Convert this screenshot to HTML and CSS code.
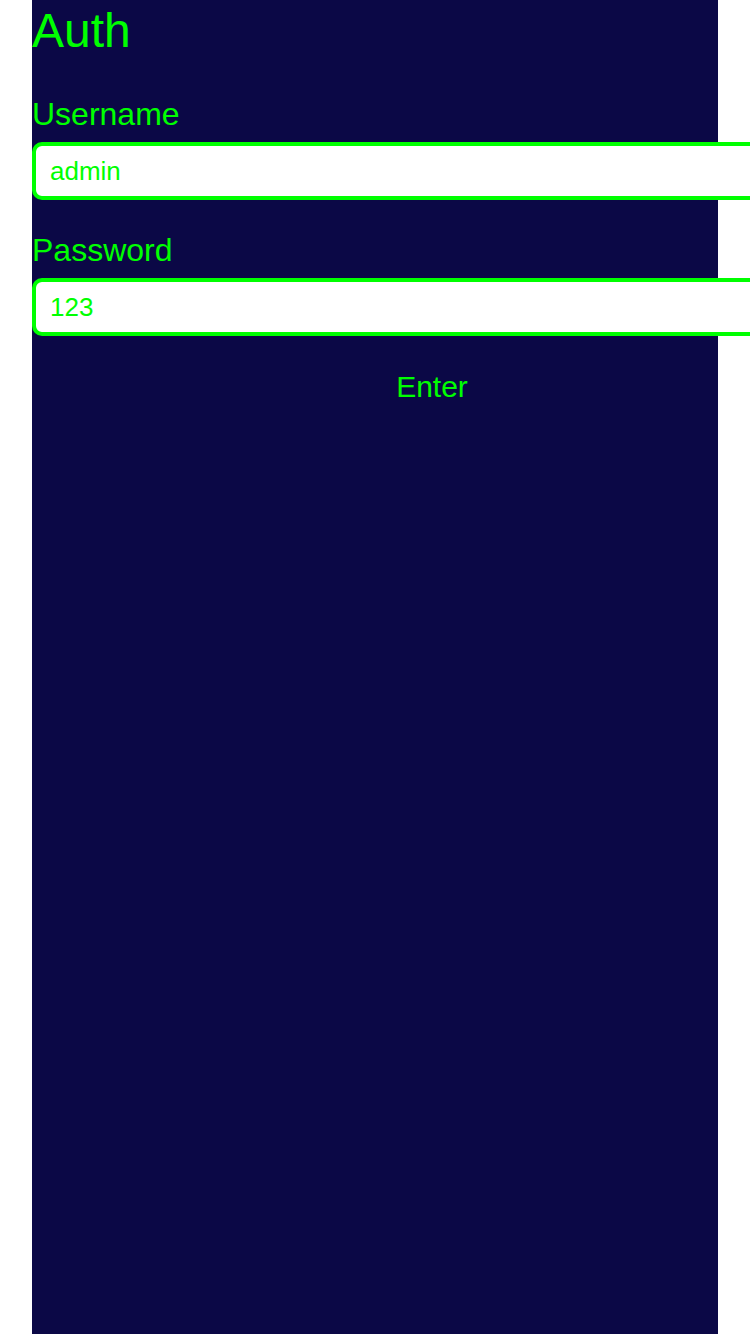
FILE: index.html
```html
<!DOCTYPE html>
<html>
<head>
<meta charset="utf-8">
<link rel="stylesheet" href="styles.css">
</head>
<body>
<main class="panel">
  <h1 class="title">Auth</h1>
  <form class="form">
    <label class="label" for="u">Username</label>
    <input class="field" id="u" type="text" value="admin">
    <label class="label label-gap" for="p">Password</label>
    <input class="field" id="p" type="text" value="123">
    <button class="enter" type="button">Enter</button>
  </form>
</main>
</body>
</html>
```
FILE: styles.css
```css
html, body {
  margin: 0;
  padding: 0;
  background: #ffffff;
}
body {
  font-family: "Liberation Sans", Arial, sans-serif;
  overflow: hidden;
}
.panel {
  margin: 0 32px;
  min-height: 1334px;
  background: #0b0846;
  color: #00ff00;
  display: flex;
  flex-direction: column;
}
.title {
  margin: 0;
  padding-top: 3px;
  font-size: 48px;
  font-weight: normal;
  line-height: 55px;
}
.form {
  width: 800px;
  display: flex;
  flex-direction: column;
  margin-top: 38px;
}
.label {
  font-size: 32px;
  line-height: 37px;
  margin-bottom: 9px;
}
.label-gap {
  margin-top: 32px;
}
.field {
  box-sizing: border-box;
  height: 58px;
  border: 4px solid #00ff00;
  border-radius: 10px;
  background: #ffffff;
  color: #00ff00;
  font-family: "Liberation Sans", Arial, sans-serif;
  font-size: 26px;
  padding: 0 14px;
  outline: none;
}
.enter {
  align-self: center;
  margin-top: 34px;
  background: none;
  border: none;
  padding: 0;
  color: #00ff00;
  font-family: "Liberation Sans", Arial, sans-serif;
  font-size: 30px;
  line-height: 34px;
}
```
